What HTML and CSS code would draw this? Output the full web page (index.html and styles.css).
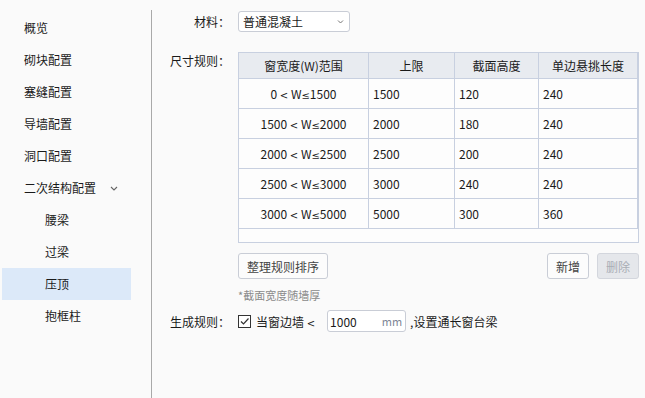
FILE: index.html
```html
<!DOCTYPE HTML>
<html lang="zh-CN">
<head>
<meta charset="utf-8" />
<meta name="viewport" content="width=device-width, initial-scale=1.0">
<title>压顶</title>
<link rel="stylesheet" href="styles.css">
</head>
<body>
<div class="app">
  <nav class="side">
    <ul class="menu">
      <li class="item">概览</li>
      <li class="item">砌块配置</li>
      <li class="item">塞缝配置</li>
      <li class="item">导墙配置</li>
      <li class="item">洞口配置</li>
      <li class="item group">二次结构配置
        <svg class="caret" width="8" height="5" viewBox="0 0 8 5"><path d="M1 1 L4 4 L7 1" fill="none" stroke="#666" stroke-width="1.1"/></svg>
      </li>
      <li class="item sub">腰梁</li>
      <li class="item sub">过梁</li>
      <li class="item sub active">压顶</li>
      <li class="item sub">抱框柱</li>
    </ul>
  </nav>

  <main class="panel">
    <div class="row">
      <label class="lbl">材料：</label>
      <div class="select">
        <span>普通混凝土</span>
        <svg width="7" height="4" viewBox="0 0 7 4"><path d="M1 0.5 L3.5 3 L6 0.5" fill="none" stroke="#777" stroke-width="1"/></svg>
      </div>
    </div>

    <div class="row rules-row">
      <label class="lbl top">尺寸规则：</label>
      <div class="rules">
        <div class="grid-wrap">
          <table class="grid">
            <colgroup>
              <col class="c1"><col class="c2"><col class="c3"><col class="c4">
            </colgroup>
            <thead>
              <tr><th>窗宽度(W)范围</th><th>上限</th><th>截面高度</th><th>单边悬挑长度</th></tr>
            </thead>
            <tbody>
              <tr><td class="range">0 <span class="op">&lt;</span> W<span class="op">≤</span>1500</td><td>1500</td><td>120</td><td>240</td></tr>
              <tr><td class="range">1500 <span class="op">&lt;</span> W<span class="op">≤</span>2000</td><td>2000</td><td>180</td><td>240</td></tr>
              <tr><td class="range">2000 <span class="op">&lt;</span> W<span class="op">≤</span>2500</td><td>2500</td><td>200</td><td>240</td></tr>
              <tr><td class="range">2500 <span class="op">&lt;</span> W<span class="op">≤</span>3000</td><td>3000</td><td>240</td><td>240</td></tr>
              <tr><td class="range">3000 <span class="op">&lt;</span> W<span class="op">≤</span>5000</td><td>5000</td><td>300</td><td>360</td></tr>
            </tbody>
          </table>
        </div>
        <div class="actions">
          <button class="btn">整理规则排序</button>
          <span class="spacer"></span>
          <button class="btn">新增</button>
          <button class="btn" disabled>删除</button>
        </div>
        <p class="note">*截面宽度随墙厚</p>
      </div>
    </div>

    <div class="row gen-row">
      <label class="lbl">生成规则：</label>
      <div class="gen">
        <span class="check">
          <svg width="11" height="11" viewBox="0 0 11 11"><path d="M2 5.5 L4.5 8 L9.5 2.5" fill="none" stroke="#333" stroke-width="1.2"/></svg>
        </span>
        <span class="gen-text">当窗边墙 <span class="op">&lt;</span></span>
        <div class="num">
          <span>1000</span>
          <span class="unit">mm</span>
        </div>
        <span class="gen-tail">,设置通长窗台梁</span>
      </div>
    </div>
  </main>
</div>
</body>
</html>
```

FILE: styles.css
```css
* {
  box-sizing: border-box;
}

body {
  margin: 0;
  background: #fafafa;
  color: #1a1a1a;
  font-family: "Noto Sans CJK SC", "Noto Sans", sans-serif;
  font-size: 12px;
}

.app {
  display: flex;
  height: 398px;
}

/* left menu */
.side {
  width: 151px;
  flex: none;
}
.menu {
  list-style: none;
  margin: 0 0 0 2px;
  padding: 12px 0 0;
  width: 129px;
}
.item {
  height: 32px;
  line-height: 32px;
  padding-left: 22px;
  display: flex;
  align-items: center;
}
.item.sub {
  padding-left: 43px;
}
.item.active {
  background: #dce9f9;
}
.caret {
  margin-left: 14px;
}

/* right panel */
.panel {
  flex: 1;
  margin-top: 10px;
  padding: 1px 6px 0 0;
  border-left: 1px solid #a9a9a9;
}
.row {
  display: grid;
  grid-template-columns: 78px 1fr;
  column-gap: 8px;
  align-items: center;
}
.lbl {
  text-align: right;
  line-height: 21px;
}
.lbl.top {
  align-self: start;
  line-height: 18px;
}

.select {
  width: 112px;
  height: 21px;
  border: 1px solid #c9cdd6;
  border-radius: 3px;
  background: #fff;
  display: flex;
  align-items: center;
  justify-content: space-between;
  padding: 0 5px 0 4px;
}

/* narrow latin comparison signs */
.op {
  font-family: "DejaVu Sans", sans-serif;
  font-size: 10px;
}

.rules-row {
  margin-top: 20px;
}
.grid-wrap {
  height: 191px;
  border: 1px solid #c8d0e0;
  background: #fdfdfd;
}
.grid {
  width: 399px;
  table-layout: fixed;
  border-collapse: separate;
  border-spacing: 0;
}
.c1 { width: 130px; }
.c2 { width: 86px; }
.c3 { width: 84px; }
.c4 { width: 99px; }

.grid th,
.grid td {
  border-right: 1px solid #c8d0e0;
  border-bottom: 1px solid #c8d0e0;
  padding: 0 4px;
  font-weight: normal;
  text-align: left;
  white-space: nowrap;
}
.grid thead tr {
  height: 26px;
}
.grid th {
  background: #e8ebf0;
  text-align: center;
}
.grid tbody tr {
  height: 30px;
}
.grid td.range {
  text-align: center;
}

.actions {
  display: flex;
  gap: 8px;
  margin-top: 10px;
}
.spacer {
  flex: 1;
}
.btn {
  height: 26px;
  padding: 0 8px;
  border: 1px solid #c9cdd6;
  border-radius: 3px;
  background: #fcfcfc;
  color: #444;
  font-family: inherit;
  font-size: 12px;
  cursor: pointer;
}
.btn:disabled {
  background: #e5e7eb;
  border-color: #d3d6dd;
  color: #a9adb5;
  cursor: default;
}

.note {
  margin: 9px 0 0;
  line-height: 14px;
  font-size: 11px;
  color: #8a8a8a;
}

.gen-row {
  margin-top: 8px;
}
.gen {
  display: flex;
  align-items: center;
  height: 22px;
}
.check {
  width: 13px;
  height: 13px;
  border: 1px solid #333;
  background: #fff;
  display: flex;
  align-items: center;
  justify-content: center;
}
.gen-text {
  margin-left: 5px;
}
.num {
  width: 79px;
  height: 22px;
  margin-left: 12px;
  border: 1px solid #c9cdd6;
  border-radius: 3px;
  background: #fff;
  display: flex;
  align-items: center;
  justify-content: space-between;
  padding: 0 3px 0 2px;
}
.unit {
  font-size: 11px;
  color: #7d8595;
}
.gen-tail {
  margin-left: 4px;
}
```
